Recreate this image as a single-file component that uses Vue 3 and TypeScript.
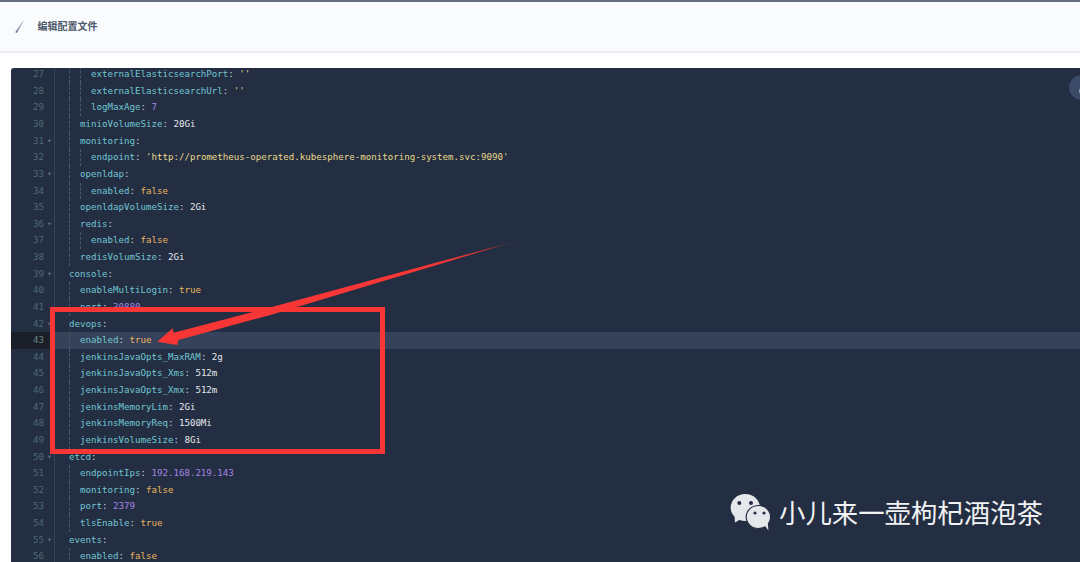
<script setup lang="ts">
type Kind = 'plain' | 'number' | 'bool' | 'str'
interface Line { n: number; depth: number; key: string; val?: string; kind?: Kind; fold?: boolean }
const lines: Line[] = [
  { n: 27, depth: 3, key: 'externalElasticsearchPort', val: "''", kind: 'str' },
  { n: 28, depth: 3, key: 'externalElasticsearchUrl', val: "''", kind: 'str' },
  { n: 29, depth: 3, key: 'logMaxAge', val: '7', kind: 'number' },
  { n: 30, depth: 2, key: 'minioVolumeSize', val: '20Gi', kind: 'plain' },
  { n: 31, depth: 2, key: 'monitoring', fold: true },
  { n: 32, depth: 3, key: 'endpoint', val: "'http://prometheus-operated.kubesphere-monitoring-system.svc:9090'", kind: 'str' },
  { n: 33, depth: 2, key: 'openldap', fold: true },
  { n: 34, depth: 3, key: 'enabled', val: 'false', kind: 'bool' },
  { n: 35, depth: 2, key: 'openldapVolumeSize', val: '2Gi', kind: 'plain' },
  { n: 36, depth: 2, key: 'redis', fold: true },
  { n: 37, depth: 3, key: 'enabled', val: 'false', kind: 'bool' },
  { n: 38, depth: 2, key: 'redisVolumSize', val: '2Gi', kind: 'plain' },
  { n: 39, depth: 1, key: 'console', fold: true },
  { n: 40, depth: 2, key: 'enableMultiLogin', val: 'true', kind: 'bool' },
  { n: 41, depth: 2, key: 'port', val: '30880', kind: 'number' },
  { n: 42, depth: 1, key: 'devops', fold: true },
  { n: 43, depth: 2, key: 'enabled', val: 'true', kind: 'bool' },
  { n: 44, depth: 2, key: 'jenkinsJavaOpts_MaxRAM', val: '2g', kind: 'plain' },
  { n: 45, depth: 2, key: 'jenkinsJavaOpts_Xms', val: '512m', kind: 'plain' },
  { n: 46, depth: 2, key: 'jenkinsJavaOpts_Xmx', val: '512m', kind: 'plain' },
  { n: 47, depth: 2, key: 'jenkinsMemoryLim', val: '2Gi', kind: 'plain' },
  { n: 48, depth: 2, key: 'jenkinsMemoryReq', val: '1500Mi', kind: 'plain' },
  { n: 49, depth: 2, key: 'jenkinsVolumeSize', val: '8Gi', kind: 'plain' },
  { n: 50, depth: 1, key: 'etcd', fold: true },
  { n: 51, depth: 2, key: 'endpointIps', val: '192.168.219.143', kind: 'number' },
  { n: 52, depth: 2, key: 'monitoring', val: 'false', kind: 'bool' },
  { n: 53, depth: 2, key: 'port', val: '2379', kind: 'number' },
  { n: 54, depth: 2, key: 'tlsEnable', val: 'true', kind: 'bool' },
  { n: 55, depth: 1, key: 'events', fold: true },
  { n: 56, depth: 2, key: 'enabled', val: 'false', kind: 'bool' },
]
const activeLine = 43
</script>

<template>
  <div class="page">
    <header class="bar">
      <svg class="slash" width="10" height="14" viewBox="0 0 10 14" aria-hidden="true">
        <defs>
          <linearGradient id="slashFade" x1="0" y1="1" x2="1" y2="0">
            <stop offset="0" stop-color="#68748a" />
            <stop offset="1" stop-color="#aab3c2" />
          </linearGradient>
        </defs>
        <path d="M0.2 12.2 L1.9 13.1 L8.6 1 L8.2 0.8 Z" fill="url(#slashFade)" />
      </svg>
      <h1 class="title">编辑配置文件</h1>
    </header>
    <main class="content">
      <section class="editor">
        <div class="scroller">
          <div v-for="l in lines" :key="l.n" class="row" :class="{ active: l.n === activeLine }">
            <div class="gutter">
              <span class="lineno">{{ l.n }}</span>
              <span class="fold"><svg v-if="l.fold" width="5" height="4" viewBox="0 0 5 4"><path d="M0.5 0.8 H4.5 L2.5 3.4 Z" fill="#5b6b78" /></svg></span>
            </div>
            <div class="code">
              <span v-for="d in l.depth" :key="d" class="indent" :class="{ guide: d > 1 }"></span>
              <span class="key">{{ l.key }}</span><span class="colon">:</span>
              <span v-if="l.val" class="val" :class="l.kind">&nbsp;{{ l.val }}</span>
            </div>
          </div>
        </div>
        <div class="fab"></div>
      </section>
    </main>

    <div class="redbox"></div>
    <svg class="arrow" width="1080" height="562" viewBox="0 0 1080 562" aria-hidden="true">
      <defs>
        <linearGradient id="tail" gradientUnits="userSpaceOnUse" x1="520" y1="240" x2="440" y2="261">
          <stop offset="0" stop-color="#f93636" stop-opacity="0" />
          <stop offset="0.4" stop-color="#f93636" stop-opacity="0.7" />
          <stop offset="1" stop-color="#f93636" />
        </linearGradient>
      </defs>
      <path d="M157.3 341.7 L172.7 328.3 L173.5 332.7 L270 307.5 L520 240 L272 314.5 L178.3 340 L177.3 345 Z" fill="url(#tail)" />
    </svg>

    <div class="mark">
      <svg class="wechat" width="44" height="40" viewBox="0 0 44 40" aria-hidden="true">
        <ellipse cx="15.3" cy="15.5" rx="14.6" ry="13.5" fill="#e6e7ea" />
        <path d="M4.6 24 L5 30.4 L11 27 Z" fill="#e6e7ea" />
        <ellipse cx="28.4" cy="25" rx="12.2" ry="11.5" fill="#e6e7ea" stroke="#242e42" stroke-width="1.2" />
        <path d="M34.5 33 L38.4 38.4 L37.8 31 Z" fill="#e6e7ea" />
        <circle cx="9.3" cy="11" r="2" fill="#242e42" />
        <circle cx="21" cy="11" r="2" fill="#242e42" />
        <circle cx="25" cy="21" r="1.6" fill="#242e42" />
        <circle cx="34" cy="21" r="1.6" fill="#242e42" />
      </svg>
      <span class="mark-text">小儿来一壶枸杞酒泡茶</span>
    </div>
  </div>
</template>

<style>
html, body { margin: 0; background: #fff; }
</style>

<style scoped>
.page {
  position: relative;
  width: 1080px;
  height: 562px;
  overflow: hidden;
  background: #fff;
  display: flex;
  flex-direction: column;
}
.bar {
  flex: none;
  box-sizing: border-box;
  height: 53px;
  border-top: 2px solid #666e7e;
  border-bottom: 2px solid #e9edf2;
  background: #f9fbfd;
  display: flex;
  align-items: center;
  padding: 0 0 2px 15px;
  gap: 12.5px;
}
.slash { flex: none; margin-top: 2px; }
.title {
  margin: 0;
  font: 700 10px/14px "Noto Sans CJK SC", "Noto Sans", sans-serif;
  color: #4d586a;
}
.content {
  flex: 1;
  min-height: 0;
  padding: 15px 0 0 11px;
  display: flex;
}
.editor {
  position: relative;
  flex: 1;
  min-width: 0;
  background: #242e42;
  border-radius: 3px 0 0 0;
  overflow: hidden;
}
.scroller {
  margin-top: -1.8px;
  font: 9.15px/16.625px "DejaVu Sans Mono", monospace;
}
.row { display: flex; height: 16.625px; white-space: pre; }
.gutter {
  flex: none;
  box-sizing: border-box;
  width: 44px;
  border-right: 1px solid #36435c;
  display: flex;
  color: #4d6a72;
}
.lineno { width: 33px; text-align: right; }
.fold { flex: 1; display: flex; align-items: center; justify-content: center; padding-left: 1px; }
.code {
  flex: 1;
  padding-left: 3px;
  display: flex;
  color: #d8dee8;
}
.indent { width: 11px; flex: none; }
.indent.guide { border-left: 1px dashed #4a566b; box-sizing: border-box; }
.row.active .gutter { background: #1b1f28; color: #6b838a; }
.row.active .code { background: #364259; }
.key { color: #70c6d3; }
.colon { color: #c6d0dc; }
.val.plain { color: #e6e9ee; }
.val.number { color: #a585e4; }
.val.bool { color: #ebb55f; }
.val.str { color: #e8d98a; }
.fab {
  position: absolute;
  top: 7px;
  right: -14px;
  width: 25px;
  height: 25px;
  border-radius: 50%;
  background: #3b4a66;
}
.fab::after {
  content: "";
  position: absolute;
  left: 10px;
  top: 14px;
  width: 1px;
  height: 4px;
  background: #8d98ab;
}
.redbox {
  position: absolute;
  left: 50px;
  top: 307px;
  width: 335px;
  height: 147px;
  box-sizing: border-box;
  border: 5.5px solid #f93636;
}
.arrow { position: absolute; left: 0; top: 0; pointer-events: none; }
.mark {
  position: absolute;
  left: 730px;
  top: 492px;
  display: flex;
  align-items: center;
  gap: 5px;
  height: 40px;
}
.wechat { flex: none; }
.mark-text {
  font: 400 26.4px/40px "Noto Sans CJK SC", sans-serif;
  color: #f1f2f4;
  white-space: nowrap;
}
</style>
